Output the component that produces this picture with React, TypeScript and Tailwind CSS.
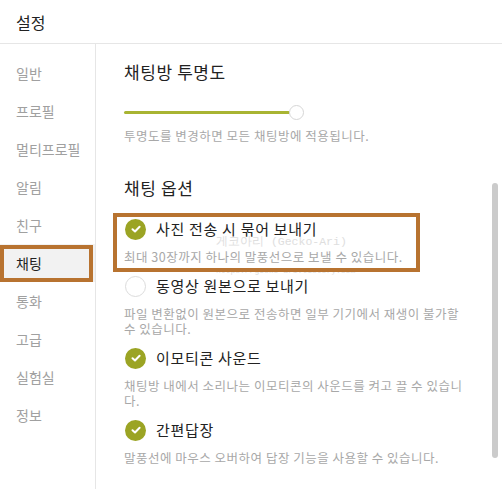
import React from 'react';

const menu = ['일반', '프로필', '멀티프로필', '알림', '친구', '채팅', '통화', '고급', '실험실', '정보'];

const options = [
  { label: '사진 전송 시 묶어 보내기', desc: '최대 30장까지 하나의 말풍선으로 보낼 수 있습니다.', checked: true },
  { label: '동영상 원본으로 보내기', desc: '파일 변환없이 원본으로 전송하면 일부 기기에서 재생이 불가할 수 있습니다.', checked: false },
  { label: '이모티콘 사운드', desc: '채팅방 내에서 소리나는 이모티콘의 사운드를 켜고 끌 수 있습니다.', checked: true },
  { label: '간편답장', desc: '말풍선에 마우스 오버하여 답장 기능을 사용할 수 있습니다.', checked: true },
];

function CheckCircle({ checked }: { checked: boolean }) {
  if (!checked) {
    return <div className="h-[21px] w-[21px] shrink-0 rounded-full border border-[#dcdcdc] bg-white" />;
  }
  return (
    <div className="flex h-[21px] w-[21px] shrink-0 items-center justify-center rounded-full bg-[#9ba424]">
      <svg width="12" height="12" viewBox="0 0 12 12" fill="none">
        <path d="M2.5 6.2L5 8.5L9.6 3.8" stroke="white" strokeWidth="2" strokeLinecap="round" strokeLinejoin="round" />
      </svg>
    </div>
  );
}

export default function App() {
  return (
    <div
      className="relative h-[489px] w-[502px] overflow-hidden bg-white text-[#222]"
      style={{ fontFamily: '"Noto Sans CJK KR", "Noto Sans", sans-serif' }}
    >
      {/* Header */}
      <div className="flex h-[44px] items-center border-b border-[#e6e6e6] pl-4 text-[16px]">설정</div>

      <div className="flex h-[445px]">
        {/* Sidebar */}
        <aside className="flex w-[96px] shrink-0 flex-col border-r border-[#e6e6e6] pt-[10px]">
          {menu.map((item) => (
            <div
              key={item}
              className={
                item === '채팅'
                  ? 'flex h-[38px] items-center bg-[#f2f2f2] pl-4 text-[14px] text-[#222]'
                  : 'flex h-[38px] items-center pl-4 text-[14px] text-[#a0a0a0]'
              }
            >
              {item}
            </div>
          ))}
        </aside>

        {/* Content */}
        <main className="relative flex-1 pl-[28px]">
          <h2 className="mt-[18px] text-[17px] leading-[20px] font-normal tracking-[0.6px]">채팅방 투명도</h2>

          <div className="mt-[23px] flex h-[14px] w-[180px] items-center">
            <div className="h-[3px] w-[166px] rounded-full bg-[#a8b432]" />
            <div className="-ml-[1px] h-[15px] w-[15px] rounded-full border border-[#d6d6d6] bg-white" />
          </div>

          <p className="mt-[9px] text-[12.5px] leading-[16px] tracking-[0.5px] text-[#a8a8a8]">
            투명도를 변경하면 모든 채팅방에 적용됩니다.
          </p>

          <h2 className="mt-[34px] text-[17px] leading-[20px] font-normal tracking-[0.6px]">채팅 옵션</h2>

          <div className="mt-[20px] flex flex-col">
            {options.map((opt, i) => (
              <div key={opt.label} className={i === 0 ? '' : 'mt-[11px]'}>
                <div className="flex h-[22px] items-center gap-[10px] pl-[1px]">
                  <CheckCircle checked={opt.checked} />
                  <span className="text-[15px] leading-[16px] tracking-[0.7px]">{opt.label}</span>
                </div>
                <p className="mt-[9px] w-[346px] break-all text-[12.5px] leading-[15px] tracking-[0.5px] text-[#a8a8a8]">
                  {opt.desc}
                </p>
              </div>
            ))}
          </div>

          {/* Scrollbar */}
          <div className="absolute right-[4px] top-[139px] h-[275px] w-[6px] rounded-full bg-[#cbcbcb]" />
        </main>
      </div>

      {/* Watermark */}
      <div className="pointer-events-none absolute left-[216px] top-[237px] font-mono text-[11.5px] leading-[10px] text-[#dedede]">
        게코아리 (Gecko-Ari)
      </div>
      <div className="pointer-events-none absolute left-[216px] top-[266px] font-mono text-[8px] leading-[10px] text-[#dcdcdc]">
        https://gecko-ari.tistory.com
      </div>

      {/* Annotation boxes */}
      <div className="pointer-events-none absolute left-0 top-[245px] h-[37px] w-[93px] border-4 border-[#b87330]" />
      <div className="pointer-events-none absolute left-[113px] top-[213px] h-[59px] w-[307px] border-4 border-[#b87330]" />
    </div>
  );
}
